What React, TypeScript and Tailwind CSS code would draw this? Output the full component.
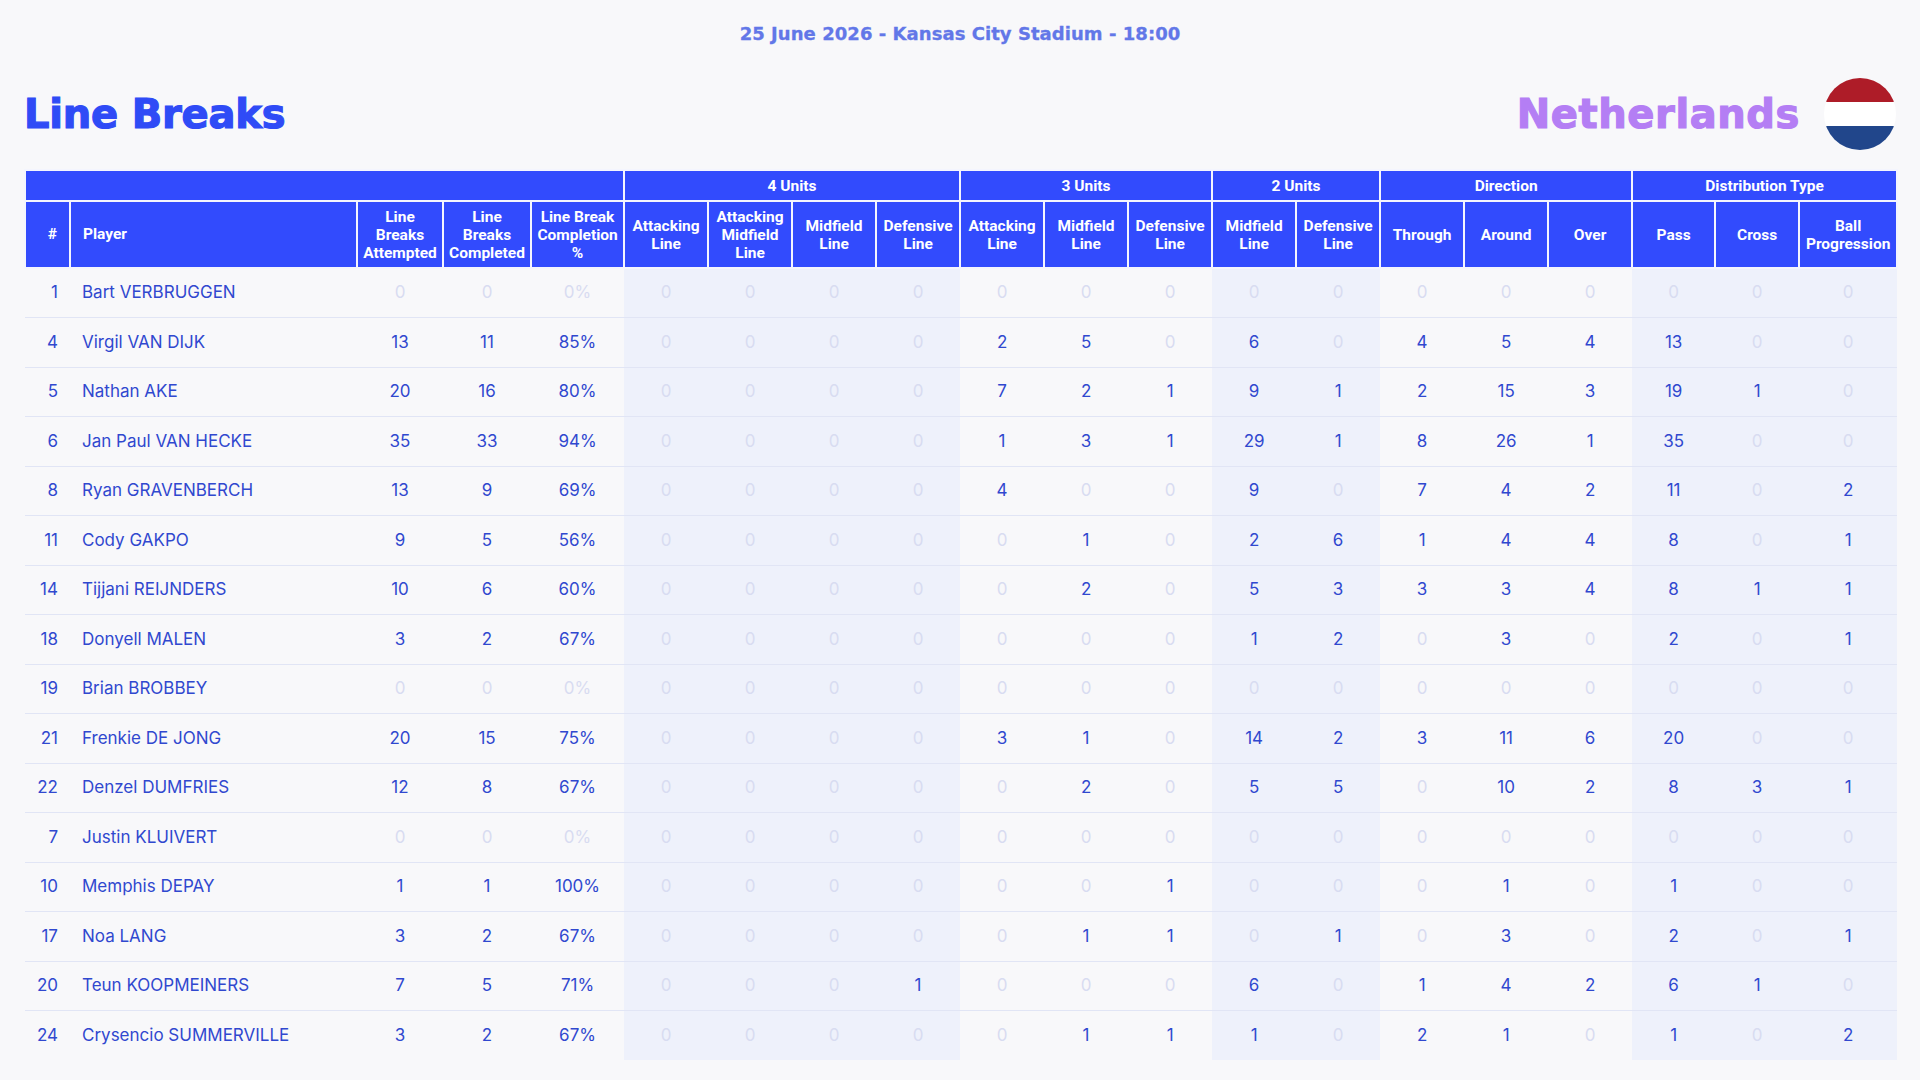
import React from 'react';

type Row = {
  no: number;
  name: string;
  values: string[];
};

// column widths, px (table spans 1872px)
const colWidths = [45, 287, 86, 88, 93, 84, 84, 84, 84, 84, 84, 84, 84, 84, 84, 84, 84, 83, 84, 98];

// columns with the pale blue backdrop (4 Units, 2 Units, Distribution Type)
const shaded = new Set([5, 6, 7, 8, 12, 13, 17, 18, 19]);

const groups = [
  { label: '', span: 5 },
  { label: '4 Units', span: 4 },
  { label: '3 Units', span: 3 },
  { label: '2 Units', span: 2 },
  { label: 'Direction', span: 3 },
  { label: 'Distribution Type', span: 3 },
];

const subHeaders: string[][] = [
  ['Line', 'Breaks', 'Attempted'],
  ['Line', 'Breaks', 'Completed'],
  ['Line Break', 'Completion', '%'],
  ['Attacking', 'Line'],
  ['Attacking', 'Midfield', 'Line'],
  ['Midfield', 'Line'],
  ['Defensive', 'Line'],
  ['Attacking', 'Line'],
  ['Midfield', 'Line'],
  ['Defensive', 'Line'],
  ['Midfield', 'Line'],
  ['Defensive', 'Line'],
  ['Through'],
  ['Around'],
  ['Over'],
  ['Pass'],
  ['Cross'],
  ['Ball', 'Progression'],
];

const rows: Row[] = [
  { no: 1, name: 'Bart VERBRUGGEN', values: ['0', '0', '0%', '0', '0', '0', '0', '0', '0', '0', '0', '0', '0', '0', '0', '0', '0', '0'] },
  { no: 4, name: 'Virgil VAN DIJK', values: ['13', '11', '85%', '0', '0', '0', '0', '2', '5', '0', '6', '0', '4', '5', '4', '13', '0', '0'] },
  { no: 5, name: 'Nathan AKE', values: ['20', '16', '80%', '0', '0', '0', '0', '7', '2', '1', '9', '1', '2', '15', '3', '19', '1', '0'] },
  { no: 6, name: 'Jan Paul VAN HECKE', values: ['35', '33', '94%', '0', '0', '0', '0', '1', '3', '1', '29', '1', '8', '26', '1', '35', '0', '0'] },
  { no: 8, name: 'Ryan GRAVENBERCH', values: ['13', '9', '69%', '0', '0', '0', '0', '4', '0', '0', '9', '0', '7', '4', '2', '11', '0', '2'] },
  { no: 11, name: 'Cody GAKPO', values: ['9', '5', '56%', '0', '0', '0', '0', '0', '1', '0', '2', '6', '1', '4', '4', '8', '0', '1'] },
  { no: 14, name: 'Tijjani REIJNDERS', values: ['10', '6', '60%', '0', '0', '0', '0', '0', '2', '0', '5', '3', '3', '3', '4', '8', '1', '1'] },
  { no: 18, name: 'Donyell MALEN', values: ['3', '2', '67%', '0', '0', '0', '0', '0', '0', '0', '1', '2', '0', '3', '0', '2', '0', '1'] },
  { no: 19, name: 'Brian BROBBEY', values: ['0', '0', '0%', '0', '0', '0', '0', '0', '0', '0', '0', '0', '0', '0', '0', '0', '0', '0'] },
  { no: 21, name: 'Frenkie DE JONG', values: ['20', '15', '75%', '0', '0', '0', '0', '3', '1', '0', '14', '2', '3', '11', '6', '20', '0', '0'] },
  { no: 22, name: 'Denzel DUMFRIES', values: ['12', '8', '67%', '0', '0', '0', '0', '0', '2', '0', '5', '5', '0', '10', '2', '8', '3', '1'] },
  { no: 7, name: 'Justin KLUIVERT', values: ['0', '0', '0%', '0', '0', '0', '0', '0', '0', '0', '0', '0', '0', '0', '0', '0', '0', '0'] },
  { no: 10, name: 'Memphis DEPAY', values: ['1', '1', '100%', '0', '0', '0', '0', '0', '0', '1', '0', '0', '0', '1', '0', '1', '0', '0'] },
  { no: 17, name: 'Noa LANG', values: ['3', '2', '67%', '0', '0', '0', '0', '0', '1', '1', '0', '1', '0', '3', '0', '2', '0', '1'] },
  { no: 20, name: 'Teun KOOPMEINERS', values: ['7', '5', '71%', '0', '0', '0', '1', '0', '0', '0', '6', '0', '1', '4', '2', '6', '1', '0'] },
  { no: 24, name: 'Crysencio SUMMERVILLE', values: ['3', '2', '67%', '0', '0', '0', '0', '0', '1', '1', '1', '0', '2', '1', '0', '1', '0', '2'] },
];

const NetherlandsFlag = () => (
  <svg width="72" height="72" viewBox="0 0 72 72" className="shrink-0">
    <defs>
      <clipPath id="flag-circle">
        <circle cx="36" cy="36" r="36" />
      </clipPath>
    </defs>
    <g clipPath="url(#flag-circle)">
      <rect x="0" y="0" width="72" height="24" fill="#ae1c28" />
      <rect x="0" y="24" width="72" height="24" fill="#ffffff" />
      <rect x="0" y="48" width="72" height="24" fill="#21468b" />
    </g>
  </svg>
);

export default function App() {
  return (
    <div className="min-h-screen bg-[#f8f8fa] px-[24px] pt-[24px] font-['Inter',sans-serif]">
      {/* Match info */}
      <div className="text-center text-[18px] leading-[20px] font-bold text-[#6277e8] font-['DejaVu_Sans',sans-serif] tracking-[0.05px] [-webkit-text-stroke:0.3px_#6277e8]">
        25 June 2026 - Kansas City Stadium - 18:00
      </div>

      {/* Title row */}
      <div className="mt-[34px] flex items-center justify-between">
        <h1 className="text-[40px] leading-none font-bold text-[#2f4bf6] font-['DejaVu_Sans',sans-serif] tracking-[-0.2px] [-webkit-text-stroke:1.2px_#2f4bf6]">
          Line Breaks
        </h1>
        <div className="flex items-center gap-[24px]">
          <span className="text-[40px] leading-none font-bold text-[#b47ef4] font-['DejaVu_Sans',sans-serif] tracking-[0.6px] [-webkit-text-stroke:1.2px_#b47ef4]">
            Netherlands
          </span>
          <NetherlandsFlag />
        </div>
      </div>

      {/* Table */}
      <table className="mt-[19px] w-full table-fixed border-collapse">
        <colgroup>
          {colWidths.map((w, i) => (
            <col key={i} style={{ width: w }} />
          ))}
        </colgroup>
        <thead className="font-['Roboto',sans-serif] text-white">
          <tr className="h-[31px]">
            {groups.map((g, i) => (
              <th
                key={i}
                colSpan={g.span}
                className="border-2 border-[#f4f5fe] bg-[#324bfd] text-[15.5px] font-bold leading-[18px]"
              >
                {g.label}
              </th>
            ))}
          </tr>
          <tr className="h-[67px]">
            <th className="border-2 border-[#f4f5fe] bg-[#324bfd] pr-[12px] text-right text-[15.5px] font-bold">#</th>
            <th className="border-2 border-[#f4f5fe] bg-[#324bfd] pl-[12px] text-left text-[15.5px] font-bold">Player</th>
            {subHeaders.map((lines, i) => (
              <th
                key={i}
                className="border-2 border-[#f4f5fe] bg-[#324bfd] px-0 text-center text-[15.5px] font-bold leading-[18px] whitespace-nowrap"
              >
                {lines.map((l, j) => (
                  <div key={j}>{l}</div>
                ))}
              </th>
            ))}
          </tr>
        </thead>
        <tbody className="text-[17px] text-[#3048cf]">
          {rows.map((r, ri) => {
            const last = ri === rows.length - 1;
            return (
              <tr key={r.no} className={`h-[49.5px] ${last ? '' : 'border-b border-[#e1e5f5]'}`}>
                <td className="pr-[12px] text-right">{r.no}</td>
                <td className="pl-[12px] text-left whitespace-nowrap">{r.name}</td>
                {r.values.map((v, vi) => {
                  const col = vi + 2;
                  const zero = v === '0' || v === '0%';
                  return (
                    <td
                      key={vi}
                      className={`text-center ${shaded.has(col) ? 'bg-[#eef1fb]' : ''} ${zero ? 'text-[#d8dcf1]' : ''}`}
                    >
                      {v}
                    </td>
                  );
                })}
              </tr>
            );
          })}
        </tbody>
      </table>
    </div>
  );
}
